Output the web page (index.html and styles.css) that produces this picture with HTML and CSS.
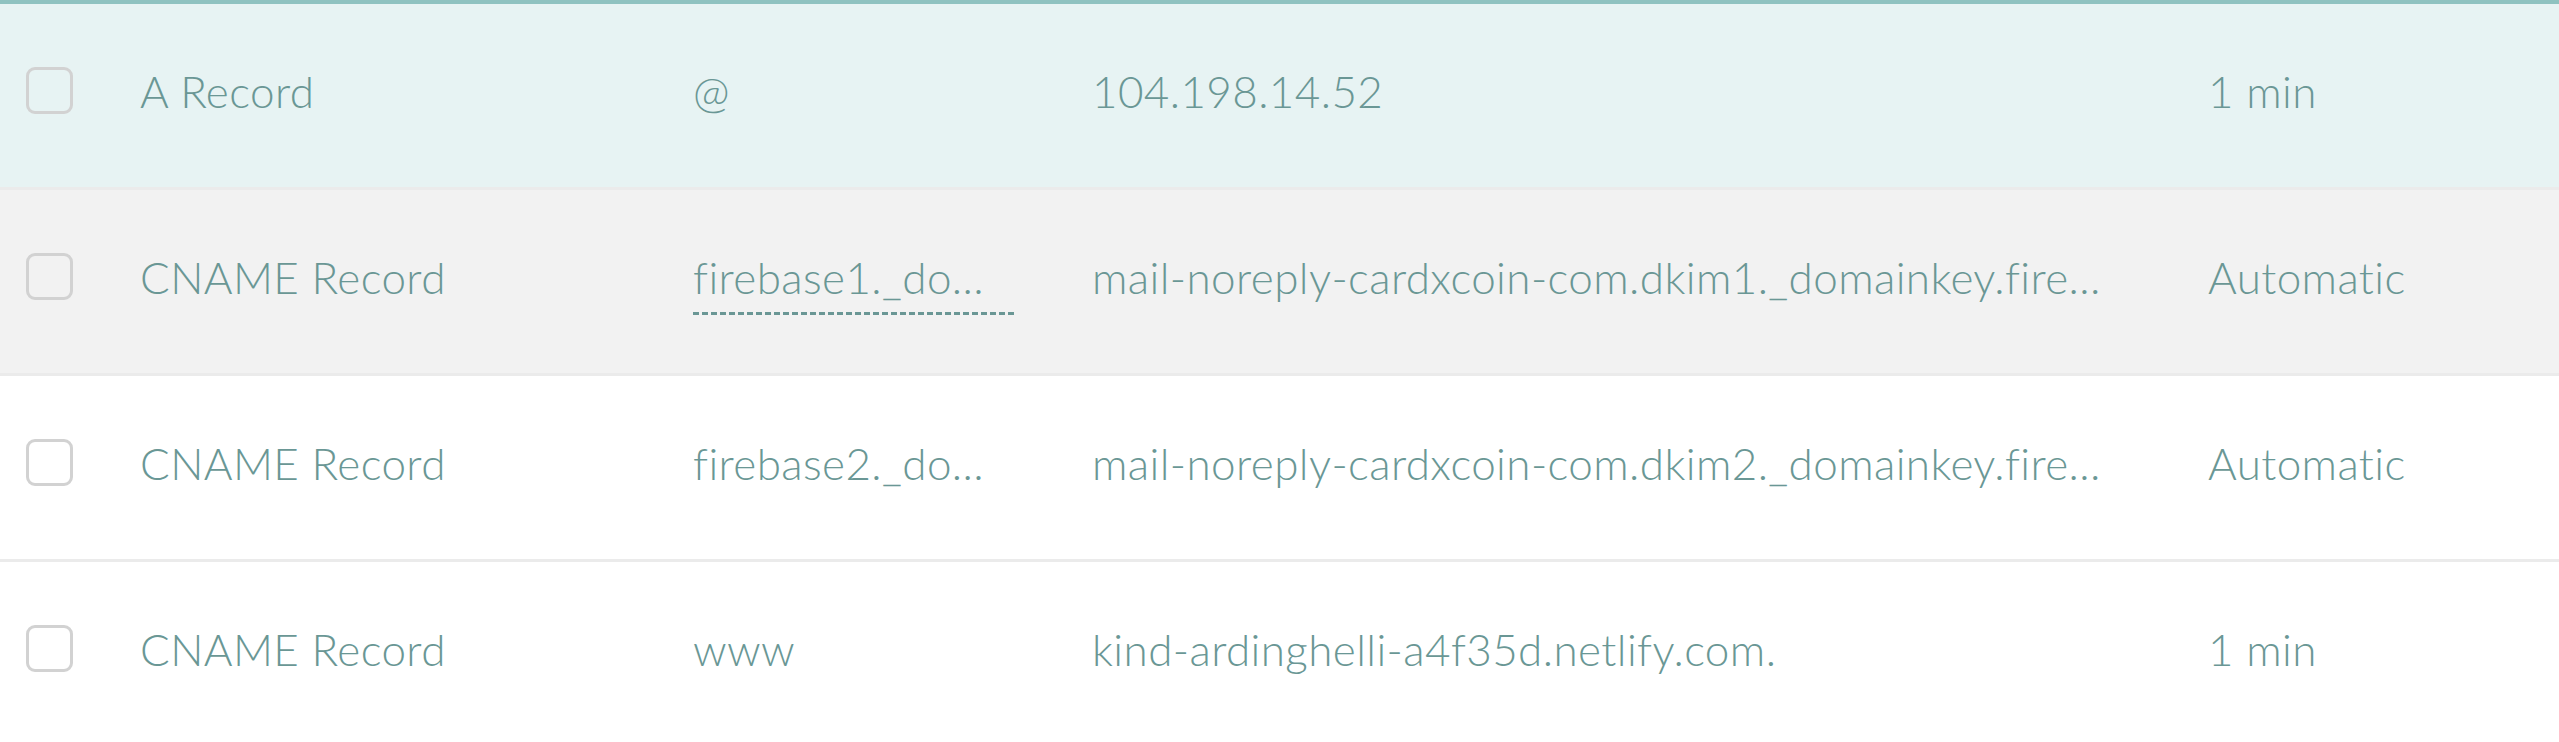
FILE: index.html
```html
<!DOCTYPE html>
<html>
<head>
    <title>DNS records</title>
    <link rel="stylesheet" href="styles.css">
</head>
<body>

<div class="records">
    <div class="record record--selected">
        <div class="cell"><span class="check"></span></div>
        <div class="cell">A Record</div>
        <div class="cell">@</div>
        <div class="cell">104.198.14.52</div>
        <div class="cell">1 min</div>
    </div>

    <div class="record record--hover">
        <div class="cell"><span class="check"></span></div>
        <div class="cell">CNAME Record</div>
        <div class="cell"><span class="abbr">firebase1._do…</span></div>
        <div class="cell">mail-noreply-cardxcoin-com.dkim1._domainkey.fire…</div>
        <div class="cell">Automatic</div>
    </div>

    <div class="record">
        <div class="cell"><span class="check"></span></div>
        <div class="cell">CNAME Record</div>
        <div class="cell">firebase2._do…</div>
        <div class="cell">mail-noreply-cardxcoin-com.dkim2._domainkey.fire…</div>
        <div class="cell">Automatic</div>
    </div>

    <div class="record">
        <div class="cell"><span class="check"></span></div>
        <div class="cell">CNAME Record</div>
        <div class="cell">www</div>
        <div class="cell">kind-ardinghelli-a4f35d.netlify.com.</div>
        <div class="cell">1 min</div>
    </div>
</div>

</body>
</html>
```

FILE: styles.css
```css
:root {
    --text-color: #6a9795;
    --accent: #8fc2c0;
    --selected-bg: #e7f3f3;
    --hover-bg: #f2f2f2;
    --row-border: #ebebeb;
    --check-border: #d2d2d2;
}

body {
    margin: 0;
    background-color: #ffffff;
    font-family: "Lato", sans-serif;
    font-weight: 300;
    color: var(--text-color);
}

.records {
    border-top: 4px solid var(--accent);
}

.record {
    display: grid;
    grid-template-columns: 114px 553px 399px 1116px 1fr;
    align-items: center;
    height: 186px;
    padding: 0 0 10px 26px;
    box-sizing: border-box;
    border-bottom: 3px solid var(--row-border);
    font-size: 44px;
    letter-spacing: 0.4px;
    white-space: nowrap;
}

.record--selected {
    background-color: var(--selected-bg);
}

.record--hover {
    background-color: var(--hover-bg);
}

.check {
    display: block;
    width: 47px;
    height: 47px;
    box-sizing: border-box;
    border: 3px solid var(--check-border);
    border-radius: 9px;
}

.abbr {
    display: inline-block;
    width: 322px;
    padding-bottom: 12px;
    margin-bottom: -15px;
    background: repeating-linear-gradient(to right, var(--text-color) 0 6px, transparent 6px 9px) left bottom / 100% 3px no-repeat;
}
```
